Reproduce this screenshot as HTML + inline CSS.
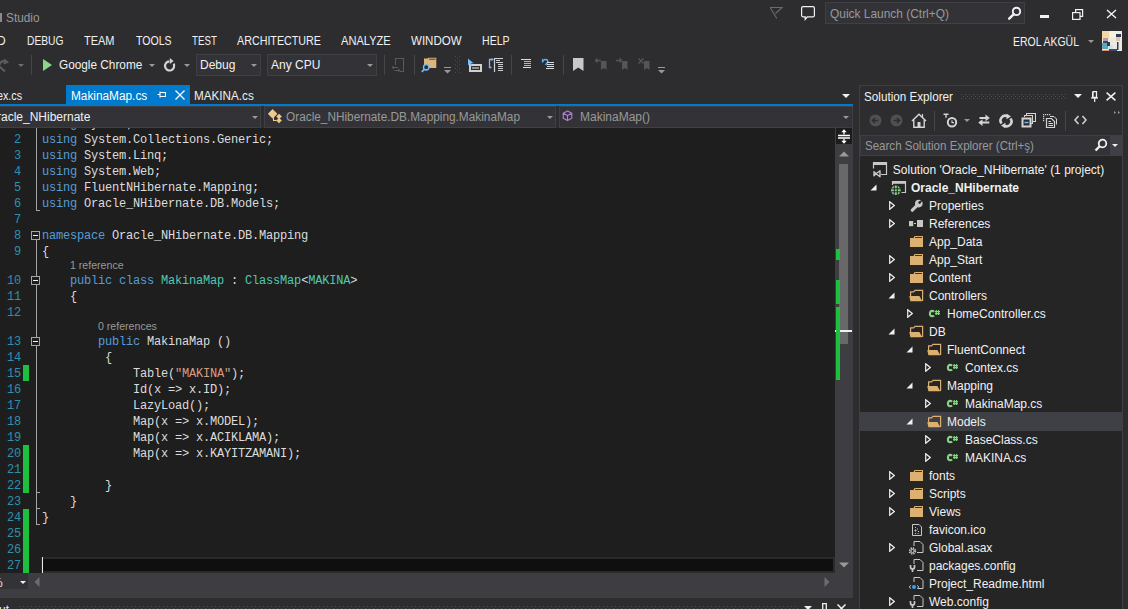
<!DOCTYPE html>
<html><head><meta charset="utf-8"><style>
html,body{margin:0;padding:0;width:1128px;height:609px;overflow:hidden;background:#2d2d30;}
body{position:relative;font-family:"Liberation Sans",sans-serif;}
.r,.t,.s{position:absolute;}
.t{white-space:nowrap;line-height:1;transform-origin:0 0;}
.ln{position:absolute;left:0;width:21px;text-align:right;font-family:"Liberation Mono",monospace;font-size:12px;letter-spacing:-0.2px;line-height:16px;color:#2b91af;}
.code{position:absolute;left:42px;white-space:pre;font-family:"Liberation Mono",monospace;font-size:12px;letter-spacing:-0.2px;line-height:16px;color:#dcdcdc;}
.lens{position:absolute;font-family:"Liberation Sans",sans-serif;font-size:10.6px;line-height:13px;color:#999;white-space:nowrap;}
</style></head><body>
<div class="r" style="left:0px;top:0px;width:1128px;height:609px;background:#2d2d30;"></div>
<div class="r" style="left:0px;top:13px;width:2px;height:9px;background:#8a8a8a;"></div>
<div class="t" style="left:6.4px;top:11.30px;font-size:13px;color:#999999;transform:scaleX(0.9085);">Studio</div>
<svg class="s" style="left:769px;top:6px;" width="15" height="14" viewBox="0 0 15 14"><path d="M1.2 1.5H13L6.5 7.5M1.2 1.5L7.8 12.5" fill="none" stroke="#6b6b6b" stroke-width="1.1"/></svg>
<svg class="s" style="left:800px;top:5px;" width="16" height="16" viewBox="0 0 16 16"><path d="M3 1.6H13A1.4 1.4 0 0 1 14.4 3V10.4A1.4 1.4 0 0 1 13 11.8H7.3L5.2 14.4V11.8H3A1.4 1.4 0 0 1 1.6 10.4V3A1.4 1.4 0 0 1 3 1.6Z" fill="none" stroke="#f1f1f1" stroke-width="1.2"/></svg>
<div class="r" style="left:825px;top:2px;width:200px;height:22px;background:#333337;border:1px solid #3f3f46;box-sizing:border-box;"></div>
<div class="t" style="left:830px;top:7.20px;font-size:13px;color:#999999;transform:scaleX(0.9175);">Quick Launch (Ctrl+Q)</div>
<svg class="s" style="left:1007px;top:6px;" width="16" height="14" viewBox="0 0 16 14"><circle cx="9.5" cy="5.4" r="3.7" fill="none" stroke="#f1f1f1" stroke-width="1.9"/><path d="M6.8 8.2L2.2 12.6" stroke="#f1f1f1" stroke-width="2.5" stroke-linecap="round"/></svg>
<div class="r" style="left:1040px;top:15px;width:9px;height:3px;background:#f1f1f1;"></div>
<svg class="s" style="left:1072px;top:9px;" width="12" height="11" viewBox="0 0 12 11"><path d="M3.6 3V0.6H10.6V7.4H8" fill="none" stroke="#f1f1f1" stroke-width="1.2"/><rect x="0.6" y="3.6" width="7.4" height="6.8" fill="none" stroke="#f1f1f1" stroke-width="1.2"/></svg>
<svg class="s" style="left:1106px;top:9px;" width="11" height="10" viewBox="0 0 11 10"><path d="M1 1L10 9M10 1L1 9" stroke="#f1f1f1" stroke-width="1.4"/></svg>
<div class="t" style="left:-3px;top:34.54px;font-size:12px;color:#f1f1f1;">D</div>
<div class="t" style="left:26.6px;top:34.54px;font-size:12px;color:#f1f1f1;transform:scaleX(0.8554);">DEBUG</div>
<div class="t" style="left:84px;top:34.54px;font-size:12px;color:#f1f1f1;transform:scaleX(0.9151);">TEAM</div>
<div class="t" style="left:135.8px;top:34.54px;font-size:12px;color:#f1f1f1;transform:scaleX(0.8779);">TOOLS</div>
<div class="t" style="left:191.5px;top:34.54px;font-size:12px;color:#f1f1f1;transform:scaleX(0.8090);">TEST</div>
<div class="t" style="left:236.9px;top:34.54px;font-size:12px;color:#f1f1f1;transform:scaleX(0.8935);">ARCHITECTURE</div>
<div class="t" style="left:341.1px;top:34.54px;font-size:12px;color:#f1f1f1;transform:scaleX(0.9241);">ANALYZE</div>
<div class="t" style="left:411.3px;top:34.54px;font-size:12px;color:#f1f1f1;transform:scaleX(0.9609);">WINDOW</div>
<div class="t" style="left:482.1px;top:34.54px;font-size:12px;color:#f1f1f1;transform:scaleX(0.8806);">HELP</div>
<div class="t" style="left:1013.4px;top:35.40px;font-size:13px;color:#f1f1f1;transform:scaleX(0.8060);">EROL AKGÜL</div>
<svg class="s" style="left:1088px;top:40px;" width="6" height="3" viewBox="0 0 6 3"><path d="M0 0H6L3.0 3Z" fill="#999"/></svg>
<svg class="s" style="left:1102px;top:31px;" width="20" height="20" viewBox="0 0 20 20"><rect width="20" height="20" fill="#f4ead8"/><rect x="0" y="0" width="7" height="8" fill="#f2d8a8"/><rect x="7" y="0" width="7" height="6" fill="#f6f0e4"/><rect x="1" y="7" width="5" height="4" fill="#b89aa8"/><rect x="1" y="10" width="5" height="3" fill="#3a4a6a"/><rect x="0" y="12" width="6" height="6" fill="#5aa8b8"/><rect x="6" y="14" width="5" height="4" fill="#d0e0e4"/><rect x="5" y="11" width="3" height="4" fill="#2a3a5a"/><rect x="14" y="3" width="5" height="3" fill="#2a3a5a"/><rect x="14" y="6" width="4" height="4" fill="#e0c4b0"/><rect x="12" y="10" width="7" height="9" fill="#ece8e4"/><rect x="15" y="11" width="1.5" height="8" fill="#2a3a5a"/><rect x="0" y="19" width="7" height="1" fill="#e09060"/><rect x="7" y="18" width="8" height="2" fill="#3a4a70"/><rect x="8" y="8" width="4" height="4" fill="#dcecec"/></svg>
<svg class="s" style="left:0px;top:57px;" width="10" height="15" viewBox="0 0 10 15"><path d="M-1 8Q1.5 2.5 6 4.5" fill="none" stroke="#5a5a5a" stroke-width="2.3"/><path d="M4.3 1.2L9.2 5.4L3.6 7.6Z" fill="#5a5a5a"/><path d="M-0.5 9.5L5 14.5" stroke="#5a5a5a" stroke-width="2.2"/></svg>
<svg class="s" style="left:18px;top:64px;" width="6" height="3" viewBox="0 0 6 3"><path d="M0 0H6L3.0 3Z" fill="#6d6d6d"/></svg>
<div class="r" style="left:31px;top:55px;width:1px;height:20px;background:#46464a;"></div>
<svg class="s" style="left:43px;top:59px;" width="9" height="12" viewBox="0 0 9 12"><path d="M0 0L9 6L0 12Z" fill="#8cd58c"/></svg>
<div class="t" style="left:59.4px;top:58.94px;font-size:12px;color:#f1f1f1;transform:scaleX(0.9834);">Google Chrome</div>
<svg class="s" style="left:149px;top:64px;" width="6" height="3" viewBox="0 0 6 3"><path d="M0 0H6L3.0 3Z" fill="#999"/></svg>
<svg class="s" style="left:163px;top:58px;" width="13" height="15" viewBox="0 0 13 15"><path d="M10.6 5.6A4.6 4.6 0 1 1 6.4 3.3" fill="none" stroke="#d4d4d4" stroke-width="2.2"/><path d="M6.8 0L10.6 3.1L6.8 6Z" fill="#d4d4d4"/></svg>
<svg class="s" style="left:184px;top:64px;" width="6" height="3" viewBox="0 0 6 3"><path d="M0 0H6L3.0 3Z" fill="#999"/></svg>
<div class="r" style="left:196px;top:54px;width:65px;height:22px;background:#333337;border:1px solid #3f3f46;box-sizing:border-box;"></div>
<div class="t" style="left:200px;top:58.94px;font-size:12px;color:#f1f1f1;">Debug</div>
<svg class="s" style="left:251px;top:64px;" width="6" height="3" viewBox="0 0 6 3"><path d="M0 0H6L3.0 3Z" fill="#999"/></svg>
<div class="r" style="left:267px;top:54px;width:110px;height:22px;background:#333337;border:1px solid #3f3f46;box-sizing:border-box;"></div>
<div class="t" style="left:271px;top:58.94px;font-size:12px;color:#f1f1f1;">Any CPU</div>
<svg class="s" style="left:367px;top:64px;" width="6" height="3" viewBox="0 0 6 3"><path d="M0 0H6L3.0 3Z" fill="#999"/></svg>
<div class="r" style="left:384px;top:55px;width:1px;height:20px;background:#46464a;"></div>
<svg class="s" style="left:391px;top:57px;" width="14" height="16" viewBox="0 0 14 16"><path d="M4.5 8V1.5H12.5V14.5H9" fill="none" stroke="#5a5a5a" stroke-width="1.1"/><path d="M2 10.5H7M3.5 13.5H8" stroke="#5a5a5a" stroke-width="1.2"/><path d="M0.5 10.5L2.8 8.6V12.4Z M9.5 13.5L7.2 11.6V15.4Z" fill="#5a5a5a"/></svg>
<div class="r" style="left:414px;top:55px;width:1px;height:20px;background:#46464a;"></div>
<svg class="s" style="left:421px;top:57px;" width="16" height="16" viewBox="0 0 16 16"><path d="M3 1.5H6.5L7.5 0.7H15.3V11H3Z" fill="#dcb67a"/><path d="M8 2.2H14.5" stroke="#3a3226" stroke-width="0.9"/><circle cx="5.2" cy="10.3" r="2.7" fill="#2d2d30" stroke="#75beff" stroke-width="1.4"/><path d="M3.2 12.5L0.8 14.9" stroke="#75beff" stroke-width="1.7"/></svg>
<svg class="s" style="left:444px;top:67px;" width="7" height="7" viewBox="0 0 7 7"><rect x="0" y="0" width="7" height="1" fill="#999"/><path d="M0 3H7L3.5 6.5Z" fill="#999"/></svg>
<svg class="s" style="left:455px;top:56px;" width="6" height="18" viewBox="0 0 6 18"><rect x="0" y="0" width="1" height="1" fill="#4a4a4f"/><rect x="4" y="0" width="1" height="1" fill="#4a4a4f"/><rect x="2" y="2" width="1" height="1" fill="#4a4a4f"/><rect x="0" y="4" width="1" height="1" fill="#4a4a4f"/><rect x="4" y="4" width="1" height="1" fill="#4a4a4f"/><rect x="2" y="6" width="1" height="1" fill="#4a4a4f"/><rect x="0" y="8" width="1" height="1" fill="#4a4a4f"/><rect x="4" y="8" width="1" height="1" fill="#4a4a4f"/><rect x="2" y="10" width="1" height="1" fill="#4a4a4f"/><rect x="0" y="12" width="1" height="1" fill="#4a4a4f"/><rect x="4" y="12" width="1" height="1" fill="#4a4a4f"/><rect x="2" y="14" width="1" height="1" fill="#4a4a4f"/><rect x="0" y="16" width="1" height="1" fill="#4a4a4f"/><rect x="4" y="16" width="1" height="1" fill="#4a4a4f"/></svg>
<svg class="s" style="left:467px;top:58px;" width="16" height="15" viewBox="0 0 16 15"><rect x="3" y="7" width="11" height="6" fill="#2d2d30" stroke="#d0d0d0" stroke-width="2"/><path d="M5 10H12" stroke="#d0d0d0" stroke-width="1.2"/><path d="M1 0.5V7.5L2.8 5.8L4.2 8.5L5.3 8L4 5.3H6.6Z" fill="#75beff"/></svg>
<svg class="s" style="left:488px;top:57px;" width="16" height="16" viewBox="0 0 16 16"><path d="M3.5 2.5H1.5V10.5H3.5" fill="none" stroke="#75beff" stroke-width="1.3"/><path d="M1.5 2.5H5M3.5 1L5 2.5L3.5 4" fill="none" stroke="#75beff" stroke-width="1"/><path d="M6.5 1V15" stroke="#d0d0d0" stroke-width="1.2"/><path d="M6.5 1.5H15M8 3.5H12M10 7.5H15M10 9.5H15M10 11.5H15M10 13.5H15" stroke="#d0d0d0" stroke-width="1"/><path d="M8 5.5H15" stroke="#d0d0d0" stroke-width="1"/></svg>
<div class="r" style="left:511px;top:55px;width:1px;height:20px;background:#46464a;"></div>
<svg class="s" style="left:520px;top:59px;" width="12" height="11" viewBox="0 0 12 11"><path d="M1 0.5H11M3 8.5H11" stroke="#dcdcdc" stroke-width="1"/><path d="M4 2.5H11M4 4.5H11M4 6.5H11" stroke="#8cd58c" stroke-width="1"/></svg>
<svg class="s" style="left:541px;top:58px;" width="14" height="13" viewBox="0 0 14 13"><path d="M1.5 4.5Q1.5 1.5 4.5 1.5Q7.5 1.5 6.5 4.5L4.5 7" fill="none" stroke="#5ab0f0" stroke-width="1.5"/><path d="M0.5 2L2 0.5L2 3.5Z" fill="#5ab0f0"/><path d="M6 4.5H13M6 6.5H13M6 8.5H13M5 10.5H13" stroke="#dcdcdc" stroke-width="1"/></svg>
<div class="r" style="left:563px;top:55px;width:1px;height:20px;background:#46464a;"></div>
<svg class="s" style="left:573px;top:58px;" width="11" height="14" viewBox="0 0 11 14"><path d="M0 0H10.5V13L5.25 9.5L0 13Z" fill="#c8c8c8"/></svg>
<svg class="s" style="left:595px;top:58px;" width="12" height="13" viewBox="0 0 12 13"><path d="M6 3H11.5V12L8.75 10L6 12Z" fill="#555"/><path d="M0.5 2.5H6M2.5 0.5L0.5 2.5L2.5 4.5" fill="none" stroke="#555" stroke-width="1.3"/></svg>
<svg class="s" style="left:616px;top:58px;" width="12" height="13" viewBox="0 0 12 13"><path d="M6 3H11.5V12L8.75 10L6 12Z" fill="#555"/><path d="M0 2.5H5.5M3.5 0.5L5.5 2.5L3.5 4.5" fill="none" stroke="#555" stroke-width="1.3"/></svg>
<svg class="s" style="left:638px;top:58px;" width="12" height="13" viewBox="0 0 12 13"><path d="M6 3H11.5V12L8.75 10L6 12Z" fill="#555"/><path d="M0.5 0.5L5.5 5.5M5.5 0.5L0.5 5.5" fill="none" stroke="#555" stroke-width="1.3"/></svg>
<svg class="s" style="left:658px;top:67px;" width="7" height="7" viewBox="0 0 7 7"><rect x="0" y="0" width="7" height="1" fill="#999"/><path d="M0 3H7L3.5 6.5Z" fill="#999"/></svg>
<div class="t" style="left:-3px;top:90.24px;font-size:12px;color:#f1f1f1;transform:scaleX(0.8929);">ex.cs</div>
<div class="r" style="left:66px;top:85px;width:124px;height:19px;background:#007acc;"></div>
<div class="t" style="left:70.6px;top:90.24px;font-size:12px;color:#ffffff;transform:scaleX(0.9850);">MakinaMap.cs</div>
<svg class="s" style="left:157px;top:90px;" width="9" height="9" viewBox="0 0 9 9"><path d="M0.5 4.5H3M3 1.5V7.5M3 2.5H8.5V6.5H3" fill="none" stroke="#fff" stroke-width="1.1"/></svg>
<svg class="s" style="left:175px;top:90px;" width="10" height="10" viewBox="0 0 10 10"><path d="M0.5 0.5L9.5 9.5M9.5 0.5L0.5 9.5" stroke="#fff" stroke-width="1.25"/></svg>
<div class="t" style="left:194.4px;top:90.24px;font-size:12px;color:#f1f1f1;transform:scaleX(0.9735);">MAKINA.cs</div>
<svg class="s" style="left:842px;top:94px;" width="8" height="4" viewBox="0 0 8 4"><path d="M0 0H8L4.0 4Z" fill="#f1f1f1"/></svg>
<div class="r" style="left:0px;top:104px;width:853px;height:2px;background:#007acc;"></div>
<div class="r" style="left:0px;top:106px;width:853px;height:22px;background:#2d2d30;"></div>
<div class="r" style="left:-1px;top:106px;width:262px;height:22px;background:#333337;border:1px solid #3f3f46;box-sizing:border-box;"></div>
<div class="t" style="left:-3px;top:111.34px;font-size:12px;color:#f1f1f1;">racle_NHibernate</div>
<svg class="s" style="left:252px;top:116px;" width="6" height="3" viewBox="0 0 6 3"><path d="M0 0H6L3.0 3Z" fill="#999"/></svg>
<div class="r" style="left:264px;top:106px;width:292px;height:22px;background:#333337;border:1px solid #3f3f46;box-sizing:border-box;"></div>
<svg class="s" style="left:268px;top:109px;" width="15" height="15" viewBox="0 0 15 15"><path d="M0.3 4.8L4.6 0.5L9 4.8L4.6 9.2Z" fill="#f0c98f" stroke="#f0c98f" stroke-width="0.8" stroke-linejoin="round"/><path d="M8.2 7.5L11 4.7L13.8 7.5L11 10.3Z" fill="#f0c98f"/><path d="M8.2 11.5L11 8.7L13.8 11.5L11 14.3Z" fill="#f0c98f"/><path d="M5.5 7V11.5H8.5" fill="none" stroke="#f0c98f" stroke-width="1.1"/></svg>
<div class="t" style="left:285.6px;top:111.34px;font-size:12px;color:#999999;transform:scaleX(0.9855);">Oracle_NHibernate.DB.Mapping.MakinaMap</div>
<svg class="s" style="left:547px;top:116px;" width="6" height="3" viewBox="0 0 6 3"><path d="M0 0H6L3.0 3Z" fill="#999"/></svg>
<div class="r" style="left:559px;top:106px;width:294px;height:22px;background:#333337;border:1px solid #3f3f46;box-sizing:border-box;"></div>
<svg class="s" style="left:562px;top:110px;" width="11" height="12" viewBox="0 0 11 12"><path d="M5.5 1L9.8 3.3V8.3L5.5 10.6L1.2 8.3V3.3Z M1.2 3.3L5.5 5.6L9.8 3.3M5.5 5.6V10.6" fill="none" stroke="#b180d7" stroke-width="1.1" stroke-linejoin="round"/></svg>
<div class="t" style="left:580.3px;top:111.34px;font-size:12px;color:#999999;transform:scaleX(0.9996);">MakinaMap()</div>
<svg class="s" style="left:843px;top:116px;" width="6" height="3" viewBox="0 0 6 3"><path d="M0 0H6L3.0 3Z" fill="#999"/></svg>
<div class="r" style="left:0px;top:128px;width:835px;height:445px;background:#1e1e1e;"></div>
<div class="r" style="left:41px;top:557px;width:794px;height:16px;background:#0f0f0f;border:2px solid #2a2a2a;box-sizing:border-box;"></div>
<div class="r" style="left:42px;top:557px;width:1px;height:16px;background:#e8e8e8;"></div>
<div style="position:absolute;left:0;top:128px;width:835px;height:445px;overflow:hidden">
<div class="code" style="top:-12px"><span style="color:#569cd6">using</span><span style="color:#dcdcdc"> System;</span></div>
<div class="ln" style="top:4px">2</div>
<div class="code" style="top:4px"><span style="color:#569cd6">using</span><span style="color:#dcdcdc"> System.Collections.Generic;</span></div>
<div class="ln" style="top:20px">3</div>
<div class="code" style="top:20px"><span style="color:#569cd6">using</span><span style="color:#dcdcdc"> System.Linq;</span></div>
<div class="ln" style="top:36px">4</div>
<div class="code" style="top:36px"><span style="color:#569cd6">using</span><span style="color:#dcdcdc"> System.Web;</span></div>
<div class="ln" style="top:52px">5</div>
<div class="code" style="top:52px"><span style="color:#569cd6">using</span><span style="color:#dcdcdc"> FluentNHibernate.Mapping;</span></div>
<div class="ln" style="top:68px">6</div>
<div class="code" style="top:68px"><span style="color:#569cd6">using</span><span style="color:#dcdcdc"> Oracle_NHibernate.DB.Models;</span></div>
<div class="ln" style="top:84px">7</div>
<div class="ln" style="top:100px">8</div>
<div class="code" style="top:100px"><span style="color:#569cd6">namespace</span><span style="color:#dcdcdc"> Oracle_NHibernate.DB.Mapping</span></div>
<div class="ln" style="top:116px">9</div>
<div class="code" style="top:116px"><span style="color:#dcdcdc">{</span></div>
<div class="ln" style="top:145px">10</div>
<div class="code" style="top:145px"><span style="color:#dcdcdc">    </span><span style="color:#569cd6">public</span><span style="color:#dcdcdc"> </span><span style="color:#569cd6">class</span><span style="color:#dcdcdc"> </span><span style="color:#4ec9b0">MakinaMap</span><span style="color:#dcdcdc"> : </span><span style="color:#4ec9b0">ClassMap</span><span style="color:#dcdcdc">&lt;</span><span style="color:#4ec9b0">MAKINA</span><span style="color:#dcdcdc">&gt;</span></div>
<div class="ln" style="top:161px">11</div>
<div class="code" style="top:161px"><span style="color:#dcdcdc">    {</span></div>
<div class="ln" style="top:177px">12</div>
<div class="ln" style="top:206px">13</div>
<div class="code" style="top:206px"><span style="color:#dcdcdc">        </span><span style="color:#569cd6">public</span><span style="color:#dcdcdc"> MakinaMap ()</span></div>
<div class="ln" style="top:222px">14</div>
<div class="code" style="top:222px"><span style="color:#dcdcdc">         {</span></div>
<div class="ln" style="top:238px">15</div>
<div class="code" style="top:238px"><span style="color:#dcdcdc">             Table(</span><span style="color:#d69d85">"MAKINA"</span><span style="color:#dcdcdc">);</span></div>
<div class="ln" style="top:254px">16</div>
<div class="code" style="top:254px"><span style="color:#dcdcdc">             Id(x =&gt; x.ID);</span></div>
<div class="ln" style="top:270px">17</div>
<div class="code" style="top:270px"><span style="color:#dcdcdc">             LazyLoad();</span></div>
<div class="ln" style="top:286px">18</div>
<div class="code" style="top:286px"><span style="color:#dcdcdc">             Map(x =&gt; x.MODEL);</span></div>
<div class="ln" style="top:302px">19</div>
<div class="code" style="top:302px"><span style="color:#dcdcdc">             Map(x =&gt; x.ACIKLAMA);</span></div>
<div class="ln" style="top:318px">20</div>
<div class="code" style="top:318px"><span style="color:#dcdcdc">             Map(x =&gt; x.KAYITZAMANI);</span></div>
<div class="ln" style="top:334px">21</div>
<div class="ln" style="top:350px">22</div>
<div class="code" style="top:350px"><span style="color:#dcdcdc">         }</span></div>
<div class="ln" style="top:366px">23</div>
<div class="code" style="top:366px"><span style="color:#dcdcdc">    }</span></div>
<div class="ln" style="top:382px">24</div>
<div class="code" style="top:382px"><span style="color:#dcdcdc">}</span></div>
<div class="ln" style="top:398px">25</div>
<div class="ln" style="top:414px">26</div>
<div class="ln" style="top:430px">27</div>
<div class="lens" style="top:131px;left:70px">1 reference</div>
<div class="lens" style="top:192px;left:98px">0 references</div>
</div>
<div class="r" style="left:23px;top:365px;width:6px;height:16px;background:#1dc03e;"></div>
<div class="r" style="left:23px;top:445px;width:6px;height:48px;background:#1dc03e;"></div>
<div class="r" style="left:23px;top:509px;width:6px;height:64px;background:#1dc03e;"></div>
<div class="r" style="left:36px;top:128px;width:1px;height:82px;background:#a5a5a5;"></div>
<div class="r" style="left:36px;top:210px;width:4px;height:1px;background:#a5a5a5;"></div>
<svg class="s" style="left:31px;top:231px;" width="9" height="9" viewBox="0 0 9 9"><rect x="0.5" y="0.5" width="8" height="8" fill="#1e1e1e" stroke="#a5a5a5"/><path d="M2 4.5H7" stroke="#f1f1f1" stroke-width="1"/></svg>
<div class="r" style="left:36px;top:240px;width:1px;height:284px;background:#a5a5a5;"></div>
<div class="r" style="left:36px;top:524px;width:4px;height:1px;background:#a5a5a5;"></div>
<svg class="s" style="left:31px;top:276px;" width="9" height="9" viewBox="0 0 9 9"><rect x="0.5" y="0.5" width="8" height="8" fill="#1e1e1e" stroke="#a5a5a5"/><path d="M2 4.5H7" stroke="#f1f1f1" stroke-width="1"/></svg>
<div class="r" style="left:36px;top:508px;width:4px;height:1px;background:#a5a5a5;"></div>
<svg class="s" style="left:31px;top:337px;" width="9" height="9" viewBox="0 0 9 9"><rect x="0.5" y="0.5" width="8" height="8" fill="#1e1e1e" stroke="#a5a5a5"/><path d="M2 4.5H7" stroke="#f1f1f1" stroke-width="1"/></svg>
<div class="r" style="left:36px;top:492px;width:4px;height:1px;background:#a5a5a5;"></div>
<div class="r" style="left:835px;top:127px;width:18px;height:446px;background:#3e3e42;"></div>
<div class="r" style="left:836px;top:128px;width:16px;height:16px;background:#1c1c1c;"></div>
<svg class="s" style="left:837px;top:129px;" width="14" height="15" viewBox="0 0 14 15"><path d="M1 6.5H13M1 9H13" stroke="#fff" stroke-width="1.3"/><path d="M7 2V5.5M7 10V13" stroke="#fff" stroke-width="1.3"/><path d="M4.3 3.3L7 0.3L9.7 3.3ZM4.3 11.7L7 14.7L9.7 11.7Z" fill="#fff"/></svg>
<svg class="s" style="left:839px;top:151px;" width="10" height="6" viewBox="0 0 10 6"><path d="M0 5.5L5 0.5L10 5.5Z" fill="#999"/></svg>
<div class="r" style="left:839px;top:164px;width:9px;height:180px;background:#686868;"></div>
<div class="r" style="left:835px;top:330px;width:17px;height:2px;background:#f1f1f1;"></div>
<div class="r" style="left:836px;top:249px;width:4px;height:11px;background:#1dc03e;"></div>
<div class="r" style="left:836px;top:280px;width:4px;height:24px;background:#1dc03e;"></div>
<div class="r" style="left:836px;top:307px;width:4px;height:73px;background:#1dc03e;"></div>
<svg class="s" style="left:839px;top:562px;" width="10" height="6" viewBox="0 0 10 6"><path d="M0 0.5L5 5.5L10 0.5Z" fill="#999"/></svg>
<div class="r" style="left:0px;top:573px;width:853px;height:25px;background:#3e3e42;"></div>
<div class="r" style="left:0px;top:573px;width:28px;height:16px;background:#333337;"></div>
<div class="t" style="left:-8px;top:576.84px;font-size:12px;color:#f1f1f1;">%</div>
<svg class="s" style="left:20px;top:581px;" width="6" height="3" viewBox="0 0 6 3"><path d="M0 0H6L3.0 3Z" fill="#f1f1f1"/></svg>
<svg class="s" style="left:34px;top:577px;" width="6" height="10" viewBox="0 0 6 10"><path d="M5.5 0L0.5 5L5.5 10Z" fill="#6d6d6d"/></svg>
<svg class="s" style="left:824px;top:577px;" width="6" height="10" viewBox="0 0 6 10"><path d="M0.5 0L5.5 5L0.5 10Z" fill="#6d6d6d"/></svg>
<div class="r" style="left:0px;top:598px;width:853px;height:11px;background:#2d2d30;"></div>
<div class="t" style="left:-1px;top:603.84px;font-size:12px;color:#f1f1f1;">ut</div>
<svg class="s" style="left:19px;top:606px;" width="780" height="3" viewBox="0 0 780 3"><rect x="0" y="0" width="1" height="1" fill="#505055"/><rect x="2" y="2" width="1" height="1" fill="#505055"/><rect x="4" y="0" width="1" height="1" fill="#505055"/><rect x="6" y="2" width="1" height="1" fill="#505055"/><rect x="8" y="0" width="1" height="1" fill="#505055"/><rect x="10" y="2" width="1" height="1" fill="#505055"/><rect x="12" y="0" width="1" height="1" fill="#505055"/><rect x="14" y="2" width="1" height="1" fill="#505055"/><rect x="16" y="0" width="1" height="1" fill="#505055"/><rect x="18" y="2" width="1" height="1" fill="#505055"/><rect x="20" y="0" width="1" height="1" fill="#505055"/><rect x="22" y="2" width="1" height="1" fill="#505055"/><rect x="24" y="0" width="1" height="1" fill="#505055"/><rect x="26" y="2" width="1" height="1" fill="#505055"/><rect x="28" y="0" width="1" height="1" fill="#505055"/><rect x="30" y="2" width="1" height="1" fill="#505055"/><rect x="32" y="0" width="1" height="1" fill="#505055"/><rect x="34" y="2" width="1" height="1" fill="#505055"/><rect x="36" y="0" width="1" height="1" fill="#505055"/><rect x="38" y="2" width="1" height="1" fill="#505055"/><rect x="40" y="0" width="1" height="1" fill="#505055"/><rect x="42" y="2" width="1" height="1" fill="#505055"/><rect x="44" y="0" width="1" height="1" fill="#505055"/><rect x="46" y="2" width="1" height="1" fill="#505055"/><rect x="48" y="0" width="1" height="1" fill="#505055"/><rect x="50" y="2" width="1" height="1" fill="#505055"/><rect x="52" y="0" width="1" height="1" fill="#505055"/><rect x="54" y="2" width="1" height="1" fill="#505055"/><rect x="56" y="0" width="1" height="1" fill="#505055"/><rect x="58" y="2" width="1" height="1" fill="#505055"/><rect x="60" y="0" width="1" height="1" fill="#505055"/><rect x="62" y="2" width="1" height="1" fill="#505055"/><rect x="64" y="0" width="1" height="1" fill="#505055"/><rect x="66" y="2" width="1" height="1" fill="#505055"/><rect x="68" y="0" width="1" height="1" fill="#505055"/><rect x="70" y="2" width="1" height="1" fill="#505055"/><rect x="72" y="0" width="1" height="1" fill="#505055"/><rect x="74" y="2" width="1" height="1" fill="#505055"/><rect x="76" y="0" width="1" height="1" fill="#505055"/><rect x="78" y="2" width="1" height="1" fill="#505055"/><rect x="80" y="0" width="1" height="1" fill="#505055"/><rect x="82" y="2" width="1" height="1" fill="#505055"/><rect x="84" y="0" width="1" height="1" fill="#505055"/><rect x="86" y="2" width="1" height="1" fill="#505055"/><rect x="88" y="0" width="1" height="1" fill="#505055"/><rect x="90" y="2" width="1" height="1" fill="#505055"/><rect x="92" y="0" width="1" height="1" fill="#505055"/><rect x="94" y="2" width="1" height="1" fill="#505055"/><rect x="96" y="0" width="1" height="1" fill="#505055"/><rect x="98" y="2" width="1" height="1" fill="#505055"/><rect x="100" y="0" width="1" height="1" fill="#505055"/><rect x="102" y="2" width="1" height="1" fill="#505055"/><rect x="104" y="0" width="1" height="1" fill="#505055"/><rect x="106" y="2" width="1" height="1" fill="#505055"/><rect x="108" y="0" width="1" height="1" fill="#505055"/><rect x="110" y="2" width="1" height="1" fill="#505055"/><rect x="112" y="0" width="1" height="1" fill="#505055"/><rect x="114" y="2" width="1" height="1" fill="#505055"/><rect x="116" y="0" width="1" height="1" fill="#505055"/><rect x="118" y="2" width="1" height="1" fill="#505055"/><rect x="120" y="0" width="1" height="1" fill="#505055"/><rect x="122" y="2" width="1" height="1" fill="#505055"/><rect x="124" y="0" width="1" height="1" fill="#505055"/><rect x="126" y="2" width="1" height="1" fill="#505055"/><rect x="128" y="0" width="1" height="1" fill="#505055"/><rect x="130" y="2" width="1" height="1" fill="#505055"/><rect x="132" y="0" width="1" height="1" fill="#505055"/><rect x="134" y="2" width="1" height="1" fill="#505055"/><rect x="136" y="0" width="1" height="1" fill="#505055"/><rect x="138" y="2" width="1" height="1" fill="#505055"/><rect x="140" y="0" width="1" height="1" fill="#505055"/><rect x="142" y="2" width="1" height="1" fill="#505055"/><rect x="144" y="0" width="1" height="1" fill="#505055"/><rect x="146" y="2" width="1" height="1" fill="#505055"/><rect x="148" y="0" width="1" height="1" fill="#505055"/><rect x="150" y="2" width="1" height="1" fill="#505055"/><rect x="152" y="0" width="1" height="1" fill="#505055"/><rect x="154" y="2" width="1" height="1" fill="#505055"/><rect x="156" y="0" width="1" height="1" fill="#505055"/><rect x="158" y="2" width="1" height="1" fill="#505055"/><rect x="160" y="0" width="1" height="1" fill="#505055"/><rect x="162" y="2" width="1" height="1" fill="#505055"/><rect x="164" y="0" width="1" height="1" fill="#505055"/><rect x="166" y="2" width="1" height="1" fill="#505055"/><rect x="168" y="0" width="1" height="1" fill="#505055"/><rect x="170" y="2" width="1" height="1" fill="#505055"/><rect x="172" y="0" width="1" height="1" fill="#505055"/><rect x="174" y="2" width="1" height="1" fill="#505055"/><rect x="176" y="0" width="1" height="1" fill="#505055"/><rect x="178" y="2" width="1" height="1" fill="#505055"/><rect x="180" y="0" width="1" height="1" fill="#505055"/><rect x="182" y="2" width="1" height="1" fill="#505055"/><rect x="184" y="0" width="1" height="1" fill="#505055"/><rect x="186" y="2" width="1" height="1" fill="#505055"/><rect x="188" y="0" width="1" height="1" fill="#505055"/><rect x="190" y="2" width="1" height="1" fill="#505055"/><rect x="192" y="0" width="1" height="1" fill="#505055"/><rect x="194" y="2" width="1" height="1" fill="#505055"/><rect x="196" y="0" width="1" height="1" fill="#505055"/><rect x="198" y="2" width="1" height="1" fill="#505055"/><rect x="200" y="0" width="1" height="1" fill="#505055"/><rect x="202" y="2" width="1" height="1" fill="#505055"/><rect x="204" y="0" width="1" height="1" fill="#505055"/><rect x="206" y="2" width="1" height="1" fill="#505055"/><rect x="208" y="0" width="1" height="1" fill="#505055"/><rect x="210" y="2" width="1" height="1" fill="#505055"/><rect x="212" y="0" width="1" height="1" fill="#505055"/><rect x="214" y="2" width="1" height="1" fill="#505055"/><rect x="216" y="0" width="1" height="1" fill="#505055"/><rect x="218" y="2" width="1" height="1" fill="#505055"/><rect x="220" y="0" width="1" height="1" fill="#505055"/><rect x="222" y="2" width="1" height="1" fill="#505055"/><rect x="224" y="0" width="1" height="1" fill="#505055"/><rect x="226" y="2" width="1" height="1" fill="#505055"/><rect x="228" y="0" width="1" height="1" fill="#505055"/><rect x="230" y="2" width="1" height="1" fill="#505055"/><rect x="232" y="0" width="1" height="1" fill="#505055"/><rect x="234" y="2" width="1" height="1" fill="#505055"/><rect x="236" y="0" width="1" height="1" fill="#505055"/><rect x="238" y="2" width="1" height="1" fill="#505055"/><rect x="240" y="0" width="1" height="1" fill="#505055"/><rect x="242" y="2" width="1" height="1" fill="#505055"/><rect x="244" y="0" width="1" height="1" fill="#505055"/><rect x="246" y="2" width="1" height="1" fill="#505055"/><rect x="248" y="0" width="1" height="1" fill="#505055"/><rect x="250" y="2" width="1" height="1" fill="#505055"/><rect x="252" y="0" width="1" height="1" fill="#505055"/><rect x="254" y="2" width="1" height="1" fill="#505055"/><rect x="256" y="0" width="1" height="1" fill="#505055"/><rect x="258" y="2" width="1" height="1" fill="#505055"/><rect x="260" y="0" width="1" height="1" fill="#505055"/><rect x="262" y="2" width="1" height="1" fill="#505055"/><rect x="264" y="0" width="1" height="1" fill="#505055"/><rect x="266" y="2" width="1" height="1" fill="#505055"/><rect x="268" y="0" width="1" height="1" fill="#505055"/><rect x="270" y="2" width="1" height="1" fill="#505055"/><rect x="272" y="0" width="1" height="1" fill="#505055"/><rect x="274" y="2" width="1" height="1" fill="#505055"/><rect x="276" y="0" width="1" height="1" fill="#505055"/><rect x="278" y="2" width="1" height="1" fill="#505055"/><rect x="280" y="0" width="1" height="1" fill="#505055"/><rect x="282" y="2" width="1" height="1" fill="#505055"/><rect x="284" y="0" width="1" height="1" fill="#505055"/><rect x="286" y="2" width="1" height="1" fill="#505055"/><rect x="288" y="0" width="1" height="1" fill="#505055"/><rect x="290" y="2" width="1" height="1" fill="#505055"/><rect x="292" y="0" width="1" height="1" fill="#505055"/><rect x="294" y="2" width="1" height="1" fill="#505055"/><rect x="296" y="0" width="1" height="1" fill="#505055"/><rect x="298" y="2" width="1" height="1" fill="#505055"/><rect x="300" y="0" width="1" height="1" fill="#505055"/><rect x="302" y="2" width="1" height="1" fill="#505055"/><rect x="304" y="0" width="1" height="1" fill="#505055"/><rect x="306" y="2" width="1" height="1" fill="#505055"/><rect x="308" y="0" width="1" height="1" fill="#505055"/><rect x="310" y="2" width="1" height="1" fill="#505055"/><rect x="312" y="0" width="1" height="1" fill="#505055"/><rect x="314" y="2" width="1" height="1" fill="#505055"/><rect x="316" y="0" width="1" height="1" fill="#505055"/><rect x="318" y="2" width="1" height="1" fill="#505055"/><rect x="320" y="0" width="1" height="1" fill="#505055"/><rect x="322" y="2" width="1" height="1" fill="#505055"/><rect x="324" y="0" width="1" height="1" fill="#505055"/><rect x="326" y="2" width="1" height="1" fill="#505055"/><rect x="328" y="0" width="1" height="1" fill="#505055"/><rect x="330" y="2" width="1" height="1" fill="#505055"/><rect x="332" y="0" width="1" height="1" fill="#505055"/><rect x="334" y="2" width="1" height="1" fill="#505055"/><rect x="336" y="0" width="1" height="1" fill="#505055"/><rect x="338" y="2" width="1" height="1" fill="#505055"/><rect x="340" y="0" width="1" height="1" fill="#505055"/><rect x="342" y="2" width="1" height="1" fill="#505055"/><rect x="344" y="0" width="1" height="1" fill="#505055"/><rect x="346" y="2" width="1" height="1" fill="#505055"/><rect x="348" y="0" width="1" height="1" fill="#505055"/><rect x="350" y="2" width="1" height="1" fill="#505055"/><rect x="352" y="0" width="1" height="1" fill="#505055"/><rect x="354" y="2" width="1" height="1" fill="#505055"/><rect x="356" y="0" width="1" height="1" fill="#505055"/><rect x="358" y="2" width="1" height="1" fill="#505055"/><rect x="360" y="0" width="1" height="1" fill="#505055"/><rect x="362" y="2" width="1" height="1" fill="#505055"/><rect x="364" y="0" width="1" height="1" fill="#505055"/><rect x="366" y="2" width="1" height="1" fill="#505055"/><rect x="368" y="0" width="1" height="1" fill="#505055"/><rect x="370" y="2" width="1" height="1" fill="#505055"/><rect x="372" y="0" width="1" height="1" fill="#505055"/><rect x="374" y="2" width="1" height="1" fill="#505055"/><rect x="376" y="0" width="1" height="1" fill="#505055"/><rect x="378" y="2" width="1" height="1" fill="#505055"/><rect x="380" y="0" width="1" height="1" fill="#505055"/><rect x="382" y="2" width="1" height="1" fill="#505055"/><rect x="384" y="0" width="1" height="1" fill="#505055"/><rect x="386" y="2" width="1" height="1" fill="#505055"/><rect x="388" y="0" width="1" height="1" fill="#505055"/><rect x="390" y="2" width="1" height="1" fill="#505055"/><rect x="392" y="0" width="1" height="1" fill="#505055"/><rect x="394" y="2" width="1" height="1" fill="#505055"/><rect x="396" y="0" width="1" height="1" fill="#505055"/><rect x="398" y="2" width="1" height="1" fill="#505055"/><rect x="400" y="0" width="1" height="1" fill="#505055"/><rect x="402" y="2" width="1" height="1" fill="#505055"/><rect x="404" y="0" width="1" height="1" fill="#505055"/><rect x="406" y="2" width="1" height="1" fill="#505055"/><rect x="408" y="0" width="1" height="1" fill="#505055"/><rect x="410" y="2" width="1" height="1" fill="#505055"/><rect x="412" y="0" width="1" height="1" fill="#505055"/><rect x="414" y="2" width="1" height="1" fill="#505055"/><rect x="416" y="0" width="1" height="1" fill="#505055"/><rect x="418" y="2" width="1" height="1" fill="#505055"/><rect x="420" y="0" width="1" height="1" fill="#505055"/><rect x="422" y="2" width="1" height="1" fill="#505055"/><rect x="424" y="0" width="1" height="1" fill="#505055"/><rect x="426" y="2" width="1" height="1" fill="#505055"/><rect x="428" y="0" width="1" height="1" fill="#505055"/><rect x="430" y="2" width="1" height="1" fill="#505055"/><rect x="432" y="0" width="1" height="1" fill="#505055"/><rect x="434" y="2" width="1" height="1" fill="#505055"/><rect x="436" y="0" width="1" height="1" fill="#505055"/><rect x="438" y="2" width="1" height="1" fill="#505055"/><rect x="440" y="0" width="1" height="1" fill="#505055"/><rect x="442" y="2" width="1" height="1" fill="#505055"/><rect x="444" y="0" width="1" height="1" fill="#505055"/><rect x="446" y="2" width="1" height="1" fill="#505055"/><rect x="448" y="0" width="1" height="1" fill="#505055"/><rect x="450" y="2" width="1" height="1" fill="#505055"/><rect x="452" y="0" width="1" height="1" fill="#505055"/><rect x="454" y="2" width="1" height="1" fill="#505055"/><rect x="456" y="0" width="1" height="1" fill="#505055"/><rect x="458" y="2" width="1" height="1" fill="#505055"/><rect x="460" y="0" width="1" height="1" fill="#505055"/><rect x="462" y="2" width="1" height="1" fill="#505055"/><rect x="464" y="0" width="1" height="1" fill="#505055"/><rect x="466" y="2" width="1" height="1" fill="#505055"/><rect x="468" y="0" width="1" height="1" fill="#505055"/><rect x="470" y="2" width="1" height="1" fill="#505055"/><rect x="472" y="0" width="1" height="1" fill="#505055"/><rect x="474" y="2" width="1" height="1" fill="#505055"/><rect x="476" y="0" width="1" height="1" fill="#505055"/><rect x="478" y="2" width="1" height="1" fill="#505055"/><rect x="480" y="0" width="1" height="1" fill="#505055"/><rect x="482" y="2" width="1" height="1" fill="#505055"/><rect x="484" y="0" width="1" height="1" fill="#505055"/><rect x="486" y="2" width="1" height="1" fill="#505055"/><rect x="488" y="0" width="1" height="1" fill="#505055"/><rect x="490" y="2" width="1" height="1" fill="#505055"/><rect x="492" y="0" width="1" height="1" fill="#505055"/><rect x="494" y="2" width="1" height="1" fill="#505055"/><rect x="496" y="0" width="1" height="1" fill="#505055"/><rect x="498" y="2" width="1" height="1" fill="#505055"/><rect x="500" y="0" width="1" height="1" fill="#505055"/><rect x="502" y="2" width="1" height="1" fill="#505055"/><rect x="504" y="0" width="1" height="1" fill="#505055"/><rect x="506" y="2" width="1" height="1" fill="#505055"/><rect x="508" y="0" width="1" height="1" fill="#505055"/><rect x="510" y="2" width="1" height="1" fill="#505055"/><rect x="512" y="0" width="1" height="1" fill="#505055"/><rect x="514" y="2" width="1" height="1" fill="#505055"/><rect x="516" y="0" width="1" height="1" fill="#505055"/><rect x="518" y="2" width="1" height="1" fill="#505055"/><rect x="520" y="0" width="1" height="1" fill="#505055"/><rect x="522" y="2" width="1" height="1" fill="#505055"/><rect x="524" y="0" width="1" height="1" fill="#505055"/><rect x="526" y="2" width="1" height="1" fill="#505055"/><rect x="528" y="0" width="1" height="1" fill="#505055"/><rect x="530" y="2" width="1" height="1" fill="#505055"/><rect x="532" y="0" width="1" height="1" fill="#505055"/><rect x="534" y="2" width="1" height="1" fill="#505055"/><rect x="536" y="0" width="1" height="1" fill="#505055"/><rect x="538" y="2" width="1" height="1" fill="#505055"/><rect x="540" y="0" width="1" height="1" fill="#505055"/><rect x="542" y="2" width="1" height="1" fill="#505055"/><rect x="544" y="0" width="1" height="1" fill="#505055"/><rect x="546" y="2" width="1" height="1" fill="#505055"/><rect x="548" y="0" width="1" height="1" fill="#505055"/><rect x="550" y="2" width="1" height="1" fill="#505055"/><rect x="552" y="0" width="1" height="1" fill="#505055"/><rect x="554" y="2" width="1" height="1" fill="#505055"/><rect x="556" y="0" width="1" height="1" fill="#505055"/><rect x="558" y="2" width="1" height="1" fill="#505055"/><rect x="560" y="0" width="1" height="1" fill="#505055"/><rect x="562" y="2" width="1" height="1" fill="#505055"/><rect x="564" y="0" width="1" height="1" fill="#505055"/><rect x="566" y="2" width="1" height="1" fill="#505055"/><rect x="568" y="0" width="1" height="1" fill="#505055"/><rect x="570" y="2" width="1" height="1" fill="#505055"/><rect x="572" y="0" width="1" height="1" fill="#505055"/><rect x="574" y="2" width="1" height="1" fill="#505055"/><rect x="576" y="0" width="1" height="1" fill="#505055"/><rect x="578" y="2" width="1" height="1" fill="#505055"/><rect x="580" y="0" width="1" height="1" fill="#505055"/><rect x="582" y="2" width="1" height="1" fill="#505055"/><rect x="584" y="0" width="1" height="1" fill="#505055"/><rect x="586" y="2" width="1" height="1" fill="#505055"/><rect x="588" y="0" width="1" height="1" fill="#505055"/><rect x="590" y="2" width="1" height="1" fill="#505055"/><rect x="592" y="0" width="1" height="1" fill="#505055"/><rect x="594" y="2" width="1" height="1" fill="#505055"/><rect x="596" y="0" width="1" height="1" fill="#505055"/><rect x="598" y="2" width="1" height="1" fill="#505055"/><rect x="600" y="0" width="1" height="1" fill="#505055"/><rect x="602" y="2" width="1" height="1" fill="#505055"/><rect x="604" y="0" width="1" height="1" fill="#505055"/><rect x="606" y="2" width="1" height="1" fill="#505055"/><rect x="608" y="0" width="1" height="1" fill="#505055"/><rect x="610" y="2" width="1" height="1" fill="#505055"/><rect x="612" y="0" width="1" height="1" fill="#505055"/><rect x="614" y="2" width="1" height="1" fill="#505055"/><rect x="616" y="0" width="1" height="1" fill="#505055"/><rect x="618" y="2" width="1" height="1" fill="#505055"/><rect x="620" y="0" width="1" height="1" fill="#505055"/><rect x="622" y="2" width="1" height="1" fill="#505055"/><rect x="624" y="0" width="1" height="1" fill="#505055"/><rect x="626" y="2" width="1" height="1" fill="#505055"/><rect x="628" y="0" width="1" height="1" fill="#505055"/><rect x="630" y="2" width="1" height="1" fill="#505055"/><rect x="632" y="0" width="1" height="1" fill="#505055"/><rect x="634" y="2" width="1" height="1" fill="#505055"/><rect x="636" y="0" width="1" height="1" fill="#505055"/><rect x="638" y="2" width="1" height="1" fill="#505055"/><rect x="640" y="0" width="1" height="1" fill="#505055"/><rect x="642" y="2" width="1" height="1" fill="#505055"/><rect x="644" y="0" width="1" height="1" fill="#505055"/><rect x="646" y="2" width="1" height="1" fill="#505055"/><rect x="648" y="0" width="1" height="1" fill="#505055"/><rect x="650" y="2" width="1" height="1" fill="#505055"/><rect x="652" y="0" width="1" height="1" fill="#505055"/><rect x="654" y="2" width="1" height="1" fill="#505055"/><rect x="656" y="0" width="1" height="1" fill="#505055"/><rect x="658" y="2" width="1" height="1" fill="#505055"/><rect x="660" y="0" width="1" height="1" fill="#505055"/><rect x="662" y="2" width="1" height="1" fill="#505055"/><rect x="664" y="0" width="1" height="1" fill="#505055"/><rect x="666" y="2" width="1" height="1" fill="#505055"/><rect x="668" y="0" width="1" height="1" fill="#505055"/><rect x="670" y="2" width="1" height="1" fill="#505055"/><rect x="672" y="0" width="1" height="1" fill="#505055"/><rect x="674" y="2" width="1" height="1" fill="#505055"/><rect x="676" y="0" width="1" height="1" fill="#505055"/><rect x="678" y="2" width="1" height="1" fill="#505055"/><rect x="680" y="0" width="1" height="1" fill="#505055"/><rect x="682" y="2" width="1" height="1" fill="#505055"/><rect x="684" y="0" width="1" height="1" fill="#505055"/><rect x="686" y="2" width="1" height="1" fill="#505055"/><rect x="688" y="0" width="1" height="1" fill="#505055"/><rect x="690" y="2" width="1" height="1" fill="#505055"/><rect x="692" y="0" width="1" height="1" fill="#505055"/><rect x="694" y="2" width="1" height="1" fill="#505055"/><rect x="696" y="0" width="1" height="1" fill="#505055"/><rect x="698" y="2" width="1" height="1" fill="#505055"/><rect x="700" y="0" width="1" height="1" fill="#505055"/><rect x="702" y="2" width="1" height="1" fill="#505055"/><rect x="704" y="0" width="1" height="1" fill="#505055"/><rect x="706" y="2" width="1" height="1" fill="#505055"/><rect x="708" y="0" width="1" height="1" fill="#505055"/><rect x="710" y="2" width="1" height="1" fill="#505055"/><rect x="712" y="0" width="1" height="1" fill="#505055"/><rect x="714" y="2" width="1" height="1" fill="#505055"/><rect x="716" y="0" width="1" height="1" fill="#505055"/><rect x="718" y="2" width="1" height="1" fill="#505055"/><rect x="720" y="0" width="1" height="1" fill="#505055"/><rect x="722" y="2" width="1" height="1" fill="#505055"/><rect x="724" y="0" width="1" height="1" fill="#505055"/><rect x="726" y="2" width="1" height="1" fill="#505055"/><rect x="728" y="0" width="1" height="1" fill="#505055"/><rect x="730" y="2" width="1" height="1" fill="#505055"/><rect x="732" y="0" width="1" height="1" fill="#505055"/><rect x="734" y="2" width="1" height="1" fill="#505055"/><rect x="736" y="0" width="1" height="1" fill="#505055"/><rect x="738" y="2" width="1" height="1" fill="#505055"/><rect x="740" y="0" width="1" height="1" fill="#505055"/><rect x="742" y="2" width="1" height="1" fill="#505055"/><rect x="744" y="0" width="1" height="1" fill="#505055"/><rect x="746" y="2" width="1" height="1" fill="#505055"/><rect x="748" y="0" width="1" height="1" fill="#505055"/><rect x="750" y="2" width="1" height="1" fill="#505055"/><rect x="752" y="0" width="1" height="1" fill="#505055"/><rect x="754" y="2" width="1" height="1" fill="#505055"/><rect x="756" y="0" width="1" height="1" fill="#505055"/><rect x="758" y="2" width="1" height="1" fill="#505055"/><rect x="760" y="0" width="1" height="1" fill="#505055"/><rect x="762" y="2" width="1" height="1" fill="#505055"/><rect x="764" y="0" width="1" height="1" fill="#505055"/><rect x="766" y="2" width="1" height="1" fill="#505055"/><rect x="768" y="0" width="1" height="1" fill="#505055"/><rect x="770" y="2" width="1" height="1" fill="#505055"/><rect x="772" y="0" width="1" height="1" fill="#505055"/><rect x="774" y="2" width="1" height="1" fill="#505055"/><rect x="776" y="0" width="1" height="1" fill="#505055"/><rect x="778" y="2" width="1" height="1" fill="#505055"/></svg>
<svg class="s" style="left:804px;top:606px;" width="8" height="4" viewBox="0 0 8 4"><path d="M0 0H8L4.0 4Z" fill="#f1f1f1"/></svg>
<svg class="s" style="left:822px;top:603px;" width="6" height="6" viewBox="0 0 6 6"><path d="M0.7 6V0.7H4.3V6" fill="none" stroke="#f1f1f1" stroke-width="1.3"/></svg>
<svg class="s" style="left:837px;top:604px;" width="9" height="9" viewBox="0 0 9 9"><path d="M0.5 0.5L8.5 8.5M8.5 0.5L0.5 8.5" stroke="#f1f1f1" stroke-width="1.5"/></svg>
<div class="r" style="left:859px;top:85px;width:264px;height:524px;background:#2d2d30;border:1px solid #3f3f46;border-bottom:none;box-sizing:border-box;"></div>
<div class="t" style="left:864.3px;top:89.90px;font-size:13px;color:#f1f1f1;transform:scaleX(0.8987);">Solution Explorer</div>
<svg class="s" style="left:961px;top:94px;" width="106" height="5" viewBox="0 0 106 5"><rect x="0" y="0" width="1" height="1" fill="#505055"/><rect x="0" y="4" width="1" height="1" fill="#505055"/><rect x="2" y="2" width="1" height="1" fill="#505055"/><rect x="4" y="0" width="1" height="1" fill="#505055"/><rect x="4" y="4" width="1" height="1" fill="#505055"/><rect x="6" y="2" width="1" height="1" fill="#505055"/><rect x="8" y="0" width="1" height="1" fill="#505055"/><rect x="8" y="4" width="1" height="1" fill="#505055"/><rect x="10" y="2" width="1" height="1" fill="#505055"/><rect x="12" y="0" width="1" height="1" fill="#505055"/><rect x="12" y="4" width="1" height="1" fill="#505055"/><rect x="14" y="2" width="1" height="1" fill="#505055"/><rect x="16" y="0" width="1" height="1" fill="#505055"/><rect x="16" y="4" width="1" height="1" fill="#505055"/><rect x="18" y="2" width="1" height="1" fill="#505055"/><rect x="20" y="0" width="1" height="1" fill="#505055"/><rect x="20" y="4" width="1" height="1" fill="#505055"/><rect x="22" y="2" width="1" height="1" fill="#505055"/><rect x="24" y="0" width="1" height="1" fill="#505055"/><rect x="24" y="4" width="1" height="1" fill="#505055"/><rect x="26" y="2" width="1" height="1" fill="#505055"/><rect x="28" y="0" width="1" height="1" fill="#505055"/><rect x="28" y="4" width="1" height="1" fill="#505055"/><rect x="30" y="2" width="1" height="1" fill="#505055"/><rect x="32" y="0" width="1" height="1" fill="#505055"/><rect x="32" y="4" width="1" height="1" fill="#505055"/><rect x="34" y="2" width="1" height="1" fill="#505055"/><rect x="36" y="0" width="1" height="1" fill="#505055"/><rect x="36" y="4" width="1" height="1" fill="#505055"/><rect x="38" y="2" width="1" height="1" fill="#505055"/><rect x="40" y="0" width="1" height="1" fill="#505055"/><rect x="40" y="4" width="1" height="1" fill="#505055"/><rect x="42" y="2" width="1" height="1" fill="#505055"/><rect x="44" y="0" width="1" height="1" fill="#505055"/><rect x="44" y="4" width="1" height="1" fill="#505055"/><rect x="46" y="2" width="1" height="1" fill="#505055"/><rect x="48" y="0" width="1" height="1" fill="#505055"/><rect x="48" y="4" width="1" height="1" fill="#505055"/><rect x="50" y="2" width="1" height="1" fill="#505055"/><rect x="52" y="0" width="1" height="1" fill="#505055"/><rect x="52" y="4" width="1" height="1" fill="#505055"/><rect x="54" y="2" width="1" height="1" fill="#505055"/><rect x="56" y="0" width="1" height="1" fill="#505055"/><rect x="56" y="4" width="1" height="1" fill="#505055"/><rect x="58" y="2" width="1" height="1" fill="#505055"/><rect x="60" y="0" width="1" height="1" fill="#505055"/><rect x="60" y="4" width="1" height="1" fill="#505055"/><rect x="62" y="2" width="1" height="1" fill="#505055"/><rect x="64" y="0" width="1" height="1" fill="#505055"/><rect x="64" y="4" width="1" height="1" fill="#505055"/><rect x="66" y="2" width="1" height="1" fill="#505055"/><rect x="68" y="0" width="1" height="1" fill="#505055"/><rect x="68" y="4" width="1" height="1" fill="#505055"/><rect x="70" y="2" width="1" height="1" fill="#505055"/><rect x="72" y="0" width="1" height="1" fill="#505055"/><rect x="72" y="4" width="1" height="1" fill="#505055"/><rect x="74" y="2" width="1" height="1" fill="#505055"/><rect x="76" y="0" width="1" height="1" fill="#505055"/><rect x="76" y="4" width="1" height="1" fill="#505055"/><rect x="78" y="2" width="1" height="1" fill="#505055"/><rect x="80" y="0" width="1" height="1" fill="#505055"/><rect x="80" y="4" width="1" height="1" fill="#505055"/><rect x="82" y="2" width="1" height="1" fill="#505055"/><rect x="84" y="0" width="1" height="1" fill="#505055"/><rect x="84" y="4" width="1" height="1" fill="#505055"/><rect x="86" y="2" width="1" height="1" fill="#505055"/><rect x="88" y="0" width="1" height="1" fill="#505055"/><rect x="88" y="4" width="1" height="1" fill="#505055"/><rect x="90" y="2" width="1" height="1" fill="#505055"/><rect x="92" y="0" width="1" height="1" fill="#505055"/><rect x="92" y="4" width="1" height="1" fill="#505055"/><rect x="94" y="2" width="1" height="1" fill="#505055"/><rect x="96" y="0" width="1" height="1" fill="#505055"/><rect x="96" y="4" width="1" height="1" fill="#505055"/><rect x="98" y="2" width="1" height="1" fill="#505055"/><rect x="100" y="0" width="1" height="1" fill="#505055"/><rect x="100" y="4" width="1" height="1" fill="#505055"/><rect x="102" y="2" width="1" height="1" fill="#505055"/><rect x="104" y="0" width="1" height="1" fill="#505055"/><rect x="104" y="4" width="1" height="1" fill="#505055"/><rect x="106" y="2" width="1" height="1" fill="#505055"/></svg>
<svg class="s" style="left:1074px;top:94px;" width="8" height="4" viewBox="0 0 8 4"><path d="M0 0H8L4.0 4Z" fill="#f1f1f1"/></svg>
<svg class="s" style="left:1091px;top:91px;" width="8" height="12" viewBox="0 0 8 12"><path d="M2 0.7H5.5V6.5H2Z" fill="none" stroke="#f1f1f1" stroke-width="1.3"/><path d="M1.5 1V6.5" stroke="#f1f1f1" stroke-width="1"/><path d="M0 6.8H7M3.7 6.8V11" stroke="#f1f1f1" stroke-width="1.2"/></svg>
<svg class="s" style="left:1106px;top:92px;" width="10" height="9" viewBox="0 0 10 9"><path d="M0.6 0.6L9.4 8.4M9.4 0.6L0.6 8.4" stroke="#f1f1f1" stroke-width="1.5"/></svg>
<svg class="s" style="left:869px;top:114px;" width="13" height="13" viewBox="0 0 13 13"><circle cx="6.5" cy="6.5" r="6" fill="#505054"/><path d="M9.5 6.5H3.5M6 4L3.5 6.5L6 9" fill="none" stroke="#2d2d30" stroke-width="1.6"/></svg>
<svg class="s" style="left:890px;top:114px;" width="13" height="13" viewBox="0 0 13 13"><circle cx="6.5" cy="6.5" r="6" fill="#505054"/><path d="M3.5 6.5H9.5M7 4L9.5 6.5L7 9" fill="none" stroke="#2d2d30" stroke-width="1.6"/></svg>
<svg class="s" style="left:911px;top:113px;" width="16" height="15" viewBox="0 0 16 15"><path d="M1 8L8 1.3L15 8" fill="none" stroke="#d4d4d4" stroke-width="1.5"/><path d="M2.8 7V14.3H13.2V7" fill="none" stroke="#d4d4d4" stroke-width="1.4"/><rect x="6.5" y="9" width="3" height="5.5" fill="#d4d4d4"/><path d="M11.5 1V4.5" stroke="#d4d4d4" stroke-width="1.2"/></svg>
<div class="r" style="left:934px;top:111px;width:1px;height:20px;background:#46464a;"></div>
<svg class="s" style="left:943px;top:113px;" width="15" height="15" viewBox="0 0 15 15"><circle cx="9" cy="9.3" r="4.2" fill="none" stroke="#d4d4d4" stroke-width="2"/><path d="M9 7.2V9.6H11" fill="none" stroke="#d4d4d4" stroke-width="1.1"/><path d="M0.5 1.2H5.5M3 1.2V4.8" stroke="#d4d4d4" stroke-width="1.4"/></svg>
<svg class="s" style="left:964px;top:119px;" width="6" height="3" viewBox="0 0 6 3"><path d="M0 0H6L3.0 3Z" fill="#999"/></svg>
<svg class="s" style="left:977px;top:114px;" width="14" height="13" viewBox="0 0 14 13"><path d="M2.5 4H11M12.3 8.5H3.5" stroke="#d4d4d4" stroke-width="2"/><path d="M8.5 0.5L12.8 4L8.5 7.2Z M5.5 5.3L1.2 8.5L5.5 12Z" fill="#d4d4d4"/></svg>
<svg class="s" style="left:999px;top:114px;" width="14" height="14" viewBox="0 0 14 14"><path d="M2.6 9.5A4.8 4.8 0 0 1 8.5 2.2M11.4 4.5A4.8 4.8 0 0 1 5.5 11.8" fill="none" stroke="#d4d4d4" stroke-width="2.6"/><path d="M7.5 -0.5L12 2.5L7.5 5.3ZM6.5 8.7L2 11.5L6.5 14.5Z" fill="#d4d4d4"/></svg>
<svg class="s" style="left:1021px;top:113px;" width="15" height="15" viewBox="0 0 15 15"><path d="M3.5 4V2.5H11.5V10.5H10M5.5 2V0.5H14.5V8.5H12" fill="none" stroke="#d4d4d4" stroke-width="1.1"/><rect x="1.5" y="5.5" width="8" height="8" fill="#2d2d30" stroke="#d4d4d4" stroke-width="2"/><path d="M3.5 9.5H7.5" stroke="#75beff" stroke-width="1.4"/></svg>
<svg class="s" style="left:1042px;top:113px;" width="16" height="16" viewBox="0 0 16 16"><rect x="1" y="1" width="1.2" height="1.2" fill="#d4d4d4"/><rect x="3" y="1" width="1.2" height="1.2" fill="#d4d4d4"/><rect x="5" y="1" width="1.2" height="1.2" fill="#d4d4d4"/><rect x="7" y="1" width="1.2" height="1.2" fill="#d4d4d4"/><rect x="1" y="3" width="1.2" height="1.2" fill="#d4d4d4"/><rect x="1" y="5" width="1.2" height="1.2" fill="#d4d4d4"/><rect x="1" y="7" width="1.2" height="1.2" fill="#d4d4d4"/><path d="M8 3.5H12L14.5 6V11.5" fill="none" stroke="#d4d4d4" stroke-width="1"/><path d="M4.5 5.5H9.5L12.5 8.5V14.5H4.5Z" fill="#2d2d30" stroke="#d4d4d4" stroke-width="1.2"/><path d="M6.5 8.5H9M6.5 10.5H11M6.5 12.5H11" stroke="#d4d4d4" stroke-width="1"/></svg>
<div class="r" style="left:1065px;top:111px;width:1px;height:20px;background:#46464a;"></div>
<svg class="s" style="left:1074px;top:115px;" width="13" height="10" viewBox="0 0 13 10"><path d="M4.5 1L1 5L4.5 9M8.5 1L12 5L8.5 9" fill="none" stroke="#d4d4d4" stroke-width="1.5"/></svg>
<svg class="s" style="left:1114px;top:111px;" width="7" height="4" viewBox="0 0 7 4"><path d="M0 0L2 1.5L0 3ZM4 0L6 1.5L4 3Z" fill="#999"/></svg>
<div class="r" style="left:860px;top:135px;width:262px;height:21px;background:#3f3f46;"></div>
<div class="r" style="left:861px;top:136px;width:249px;height:19px;background:#333337;"></div>
<div class="t" style="left:865.3px;top:139.00px;font-size:13px;color:#999999;transform:scaleX(0.8875);">Search Solution Explorer (Ctrl+ş)</div>
<svg class="s" style="left:1094px;top:138px;" width="14" height="14" viewBox="0 0 14 14"><circle cx="8.5" cy="5.5" r="3.8" fill="none" stroke="#f1f1f1" stroke-width="1.8"/><path d="M6 8L1.5 12.5" stroke="#f1f1f1" stroke-width="2.4"/></svg>
<svg class="s" style="left:1112px;top:144px;" width="6" height="3" viewBox="0 0 6 3"><path d="M0 0H6L3.0 3Z" fill="#f1f1f1"/></svg>
<div class="r" style="left:860px;top:156px;width:262px;height:453px;background:#252526;"></div>
<div class="r" style="left:860px;top:412px;width:263px;height:19px;background:#3f3f46;"></div>
<svg class="s" style="left:872px;top:161px;" width="16" height="17" viewBox="0 0 16 17"><path d="M1.5 7.5V1.5H14.5V13.5H9" fill="none" stroke="#c8c8c8" stroke-width="1.2"/><rect x="1" y="1" width="14" height="3" fill="#c8c8c8"/><path d="M2 10.8L4 12.8L2 14.8Z M4 12.8L8 9.8V15.8Z" fill="none" stroke="#c8c8c8" stroke-width="1.4" stroke-linejoin="round"/></svg>
<div class="t" style="left:892.8px;top:163.84px;font-size:12px;color:#f1f1f1;">Solution 'Oracle_NHibernate' (1 project)</div>
<svg class="s" style="left:870px;top:184px;" width="7" height="7" viewBox="0 0 7 7"><path d="M6.5 0.5V6.5H0.5Z" fill="#f1f1f1"/></svg>
<svg class="s" style="left:890px;top:179px;" width="17" height="17" viewBox="0 0 17 17"><path d="M2.5 6V2.5H15.5V13.5H11.5" fill="none" stroke="#c8c8c8" stroke-width="1.2"/><rect x="2" y="2" width="14" height="2.8" fill="#c8c8c8"/><circle cx="5.8" cy="11.3" r="4.8" fill="#8ad48a"/><path d="M1.2 9.8H10.4M1.2 12.8H10.4M4.3 6.5V16M7.3 6.5V16" stroke="#252526" stroke-width="1"/></svg>
<div class="t" style="left:911px;top:181.84px;font-size:12px;color:#f1f1f1;font-weight:bold;">Oracle_NHibernate</div>
<svg class="s" style="left:889px;top:201px;" width="6" height="9" viewBox="0 0 6 9"><path d="M0.7 0.7L5.3 4.5L0.7 8.3Z" fill="none" stroke="#f1f1f1" stroke-width="1.2"/></svg>
<svg class="s" style="left:909px;top:197px;" width="16" height="16" viewBox="0 0 16 16"><path d="M8.2 8.3L3.3 13.2" stroke="#c8c8c8" stroke-width="3.2" stroke-linecap="round"/><circle cx="9.8" cy="6.6" r="3.8" fill="#c8c8c8"/><circle cx="10.6" cy="5.6" r="1.3" fill="#252526"/><path d="M10.8 5.4L13 3.2" stroke="#252526" stroke-width="1.6"/></svg>
<div class="t" style="left:929px;top:199.84px;font-size:12px;color:#f1f1f1;">Properties</div>
<svg class="s" style="left:889px;top:219px;" width="6" height="9" viewBox="0 0 6 9"><path d="M0.7 0.7L5.3 4.5L0.7 8.3Z" fill="none" stroke="#f1f1f1" stroke-width="1.2"/></svg>
<svg class="s" style="left:909px;top:215px;" width="16" height="16" viewBox="0 0 16 16"><rect x="0" y="6" width="4.2" height="5.2" fill="#c8c8c8"/><rect x="8" y="5" width="6" height="7" fill="#c8c8c8"/><path d="M5 8.5H7" stroke="#c8c8c8" stroke-width="1"/></svg>
<div class="t" style="left:929px;top:217.84px;font-size:12px;color:#f1f1f1;">References</div>
<svg class="s" style="left:909px;top:233px;" width="16" height="16" viewBox="0 0 16 16"><path d="M1 5H4.5L5.5 3H14V14H1Z" fill="#dbb070"/><path d="M6 4.5H13" stroke="#3a3226" stroke-width="1"/></svg>
<div class="t" style="left:929px;top:235.84px;font-size:12px;color:#f1f1f1;">App_Data</div>
<svg class="s" style="left:889px;top:255px;" width="6" height="9" viewBox="0 0 6 9"><path d="M0.7 0.7L5.3 4.5L0.7 8.3Z" fill="none" stroke="#f1f1f1" stroke-width="1.2"/></svg>
<svg class="s" style="left:909px;top:251px;" width="16" height="16" viewBox="0 0 16 16"><path d="M1 5H4.5L5.5 3H14V14H1Z" fill="#dbb070"/><path d="M6 4.5H13" stroke="#3a3226" stroke-width="1"/></svg>
<div class="t" style="left:929px;top:253.84px;font-size:12px;color:#f1f1f1;">App_Start</div>
<svg class="s" style="left:889px;top:273px;" width="6" height="9" viewBox="0 0 6 9"><path d="M0.7 0.7L5.3 4.5L0.7 8.3Z" fill="none" stroke="#f1f1f1" stroke-width="1.2"/></svg>
<svg class="s" style="left:909px;top:269px;" width="16" height="16" viewBox="0 0 16 16"><path d="M1 5H4.5L5.5 3H14V14H1Z" fill="#dbb070"/><path d="M6 4.5H13" stroke="#3a3226" stroke-width="1"/></svg>
<div class="t" style="left:929px;top:271.84px;font-size:12px;color:#f1f1f1;">Content</div>
<svg class="s" style="left:888px;top:292px;" width="7" height="7" viewBox="0 0 7 7"><path d="M6.5 0.5V6.5H0.5Z" fill="#f1f1f1"/></svg>
<svg class="s" style="left:909px;top:287px;" width="16" height="16" viewBox="0 0 16 16"><path d="M1.6 10V4.9H4.6L6 3.4H13.6V14" fill="none" stroke="#dbb070" stroke-width="1.2"/><path d="M0.3 9.1H10.4L13.3 14.2H1.4Z" fill="#dbb070"/></svg>
<div class="t" style="left:929px;top:289.84px;font-size:12px;color:#f1f1f1;">Controllers</div>
<svg class="s" style="left:907px;top:309px;" width="6" height="9" viewBox="0 0 6 9"><path d="M0.7 0.7L5.3 4.5L0.7 8.3Z" fill="none" stroke="#f1f1f1" stroke-width="1.2"/></svg>
<svg class="s" style="left:927px;top:305px;" width="16" height="16" viewBox="0 0 16 16"><path d="M7.1 6.7Q6.3 5.9 5.1 5.9Q2.9 5.9 2.9 8.6Q2.9 11.3 5.1 11.3Q6.3 11.3 7.1 10.5" fill="none" stroke="#89d185" stroke-width="2.1"/><path d="M9.3 5V10M11.5 5V10M8 6.6H13M8 8.6H13" stroke="#89d185" stroke-width="1.15"/></svg>
<div class="t" style="left:947px;top:307.84px;font-size:12px;color:#f1f1f1;">HomeController.cs</div>
<svg class="s" style="left:888px;top:328px;" width="7" height="7" viewBox="0 0 7 7"><path d="M6.5 0.5V6.5H0.5Z" fill="#f1f1f1"/></svg>
<svg class="s" style="left:909px;top:323px;" width="16" height="16" viewBox="0 0 16 16"><path d="M1.6 10V4.9H4.6L6 3.4H13.6V14" fill="none" stroke="#dbb070" stroke-width="1.2"/><path d="M0.3 9.1H10.4L13.3 14.2H1.4Z" fill="#dbb070"/></svg>
<div class="t" style="left:929px;top:325.84px;font-size:12px;color:#f1f1f1;">DB</div>
<svg class="s" style="left:906px;top:346px;" width="7" height="7" viewBox="0 0 7 7"><path d="M6.5 0.5V6.5H0.5Z" fill="#f1f1f1"/></svg>
<svg class="s" style="left:927px;top:341px;" width="16" height="16" viewBox="0 0 16 16"><path d="M1.6 10V4.9H4.6L6 3.4H13.6V14" fill="none" stroke="#dbb070" stroke-width="1.2"/><path d="M0.3 9.1H10.4L13.3 14.2H1.4Z" fill="#dbb070"/></svg>
<div class="t" style="left:947px;top:343.84px;font-size:12px;color:#f1f1f1;">FluentConnect</div>
<svg class="s" style="left:925px;top:363px;" width="6" height="9" viewBox="0 0 6 9"><path d="M0.7 0.7L5.3 4.5L0.7 8.3Z" fill="none" stroke="#f1f1f1" stroke-width="1.2"/></svg>
<svg class="s" style="left:945px;top:359px;" width="16" height="16" viewBox="0 0 16 16"><path d="M7.1 6.7Q6.3 5.9 5.1 5.9Q2.9 5.9 2.9 8.6Q2.9 11.3 5.1 11.3Q6.3 11.3 7.1 10.5" fill="none" stroke="#89d185" stroke-width="2.1"/><path d="M9.3 5V10M11.5 5V10M8 6.6H13M8 8.6H13" stroke="#89d185" stroke-width="1.15"/></svg>
<div class="t" style="left:965px;top:361.84px;font-size:12px;color:#f1f1f1;">Contex.cs</div>
<svg class="s" style="left:906px;top:382px;" width="7" height="7" viewBox="0 0 7 7"><path d="M6.5 0.5V6.5H0.5Z" fill="#f1f1f1"/></svg>
<svg class="s" style="left:927px;top:377px;" width="16" height="16" viewBox="0 0 16 16"><path d="M1.6 10V4.9H4.6L6 3.4H13.6V14" fill="none" stroke="#dbb070" stroke-width="1.2"/><path d="M0.3 9.1H10.4L13.3 14.2H1.4Z" fill="#dbb070"/></svg>
<div class="t" style="left:947px;top:379.84px;font-size:12px;color:#f1f1f1;">Mapping</div>
<svg class="s" style="left:925px;top:399px;" width="6" height="9" viewBox="0 0 6 9"><path d="M0.7 0.7L5.3 4.5L0.7 8.3Z" fill="none" stroke="#f1f1f1" stroke-width="1.2"/></svg>
<svg class="s" style="left:945px;top:395px;" width="16" height="16" viewBox="0 0 16 16"><path d="M7.1 6.7Q6.3 5.9 5.1 5.9Q2.9 5.9 2.9 8.6Q2.9 11.3 5.1 11.3Q6.3 11.3 7.1 10.5" fill="none" stroke="#89d185" stroke-width="2.1"/><path d="M9.3 5V10M11.5 5V10M8 6.6H13M8 8.6H13" stroke="#89d185" stroke-width="1.15"/></svg>
<div class="t" style="left:965px;top:397.84px;font-size:12px;color:#f1f1f1;">MakinaMap.cs</div>
<svg class="s" style="left:906px;top:418px;" width="7" height="7" viewBox="0 0 7 7"><path d="M6.5 0.5V6.5H0.5Z" fill="#f1f1f1"/></svg>
<svg class="s" style="left:927px;top:413px;" width="16" height="16" viewBox="0 0 16 16"><path d="M1.6 10V4.9H4.6L6 3.4H13.6V14" fill="none" stroke="#dbb070" stroke-width="1.2"/><path d="M0.3 9.1H10.4L13.3 14.2H1.4Z" fill="#dbb070"/></svg>
<div class="t" style="left:947px;top:415.84px;font-size:12px;color:#f1f1f1;">Models</div>
<svg class="s" style="left:925px;top:435px;" width="6" height="9" viewBox="0 0 6 9"><path d="M0.7 0.7L5.3 4.5L0.7 8.3Z" fill="none" stroke="#f1f1f1" stroke-width="1.2"/></svg>
<svg class="s" style="left:945px;top:431px;" width="16" height="16" viewBox="0 0 16 16"><path d="M7.1 6.7Q6.3 5.9 5.1 5.9Q2.9 5.9 2.9 8.6Q2.9 11.3 5.1 11.3Q6.3 11.3 7.1 10.5" fill="none" stroke="#89d185" stroke-width="2.1"/><path d="M9.3 5V10M11.5 5V10M8 6.6H13M8 8.6H13" stroke="#89d185" stroke-width="1.15"/></svg>
<div class="t" style="left:965px;top:433.84px;font-size:12px;color:#f1f1f1;">BaseClass.cs</div>
<svg class="s" style="left:925px;top:453px;" width="6" height="9" viewBox="0 0 6 9"><path d="M0.7 0.7L5.3 4.5L0.7 8.3Z" fill="none" stroke="#f1f1f1" stroke-width="1.2"/></svg>
<svg class="s" style="left:945px;top:449px;" width="16" height="16" viewBox="0 0 16 16"><path d="M7.1 6.7Q6.3 5.9 5.1 5.9Q2.9 5.9 2.9 8.6Q2.9 11.3 5.1 11.3Q6.3 11.3 7.1 10.5" fill="none" stroke="#89d185" stroke-width="2.1"/><path d="M9.3 5V10M11.5 5V10M8 6.6H13M8 8.6H13" stroke="#89d185" stroke-width="1.15"/></svg>
<div class="t" style="left:965px;top:451.84px;font-size:12px;color:#f1f1f1;">MAKINA.cs</div>
<svg class="s" style="left:889px;top:471px;" width="6" height="9" viewBox="0 0 6 9"><path d="M0.7 0.7L5.3 4.5L0.7 8.3Z" fill="none" stroke="#f1f1f1" stroke-width="1.2"/></svg>
<svg class="s" style="left:909px;top:467px;" width="16" height="16" viewBox="0 0 16 16"><path d="M1 5H4.5L5.5 3H14V14H1Z" fill="#dbb070"/><path d="M6 4.5H13" stroke="#3a3226" stroke-width="1"/></svg>
<div class="t" style="left:929px;top:469.84px;font-size:12px;color:#f1f1f1;">fonts</div>
<svg class="s" style="left:889px;top:489px;" width="6" height="9" viewBox="0 0 6 9"><path d="M0.7 0.7L5.3 4.5L0.7 8.3Z" fill="none" stroke="#f1f1f1" stroke-width="1.2"/></svg>
<svg class="s" style="left:909px;top:485px;" width="16" height="16" viewBox="0 0 16 16"><path d="M1 5H4.5L5.5 3H14V14H1Z" fill="#dbb070"/><path d="M6 4.5H13" stroke="#3a3226" stroke-width="1"/></svg>
<div class="t" style="left:929px;top:487.84px;font-size:12px;color:#f1f1f1;">Scripts</div>
<svg class="s" style="left:889px;top:507px;" width="6" height="9" viewBox="0 0 6 9"><path d="M0.7 0.7L5.3 4.5L0.7 8.3Z" fill="none" stroke="#f1f1f1" stroke-width="1.2"/></svg>
<svg class="s" style="left:909px;top:503px;" width="16" height="16" viewBox="0 0 16 16"><path d="M1 5H4.5L5.5 3H14V14H1Z" fill="#dbb070"/><path d="M6 4.5H13" stroke="#3a3226" stroke-width="1"/></svg>
<div class="t" style="left:929px;top:505.84px;font-size:12px;color:#f1f1f1;">Views</div>
<svg class="s" style="left:909px;top:521px;" width="16" height="16" viewBox="0 0 16 16"><path d="M3.5 3.5H10L12.5 6V14.5H3.5Z" fill="none" stroke="#c8c8c8"/><path d="M6 6.5H7M8 8H9M5.5 9.5H7.5M6.5 8.5V10.5M9 10.5H10M6 12.5H7M8.5 12.5H9.5" stroke="#c8c8c8"/></svg>
<div class="t" style="left:929px;top:523.84px;font-size:12px;color:#f1f1f1;">favicon.ico</div>
<svg class="s" style="left:889px;top:543px;" width="6" height="9" viewBox="0 0 6 9"><path d="M0.7 0.7L5.3 4.5L0.7 8.3Z" fill="none" stroke="#f1f1f1" stroke-width="1.2"/></svg>
<svg class="s" style="left:909px;top:539px;" width="16" height="16" viewBox="0 0 16 16"><g transform="translate(-0.5,-1)"><path d="M5.5 8V3.5H11.5L14.5 6.5V14.5H8.5" fill="none" stroke="#c8c8c8"/><circle cx="4" cy="13" r="2.8" fill="none" stroke="#c8c8c8" stroke-width="1.8" stroke-dasharray="1.3 0.9"/><circle cx="4" cy="13" r="1.6" fill="none" stroke="#c8c8c8" stroke-width="1"/></g></svg>
<div class="t" style="left:929px;top:541.84px;font-size:12px;color:#f1f1f1;">Global.asax</div>
<svg class="s" style="left:909px;top:557px;" width="16" height="16" viewBox="0 0 16 16"><g transform="translate(-0.5,-1)"><path d="M5.5 8V3.5H11.5L14.5 6.5V14.5H8.5" fill="none" stroke="#c8c8c8"/><path d="M2 9V11Q2 13 4 13Q6 13 6 11V9M4 13V16" fill="none" stroke="#c8c8c8" stroke-width="1.7"/></g></svg>
<div class="t" style="left:929px;top:559.84px;font-size:12px;color:#f1f1f1;">packages.config</div>
<svg class="s" style="left:909px;top:575px;" width="16" height="16" viewBox="0 0 16 16"><g transform="translate(-0.5,-1)"><path d="M5.5 8V3.5H11.5L14.5 6.5V14.5H9.5" fill="none" stroke="#c8c8c8"/><circle cx="5.5" cy="13" r="2" fill="#3ca0f0"/><path d="M2.2 11.3L0.8 13L2.2 14.7M8.8 11.3L10.2 13L8.8 14.7" fill="none" stroke="#c8c8c8"/></g></svg>
<div class="t" style="left:929px;top:577.84px;font-size:12px;color:#f1f1f1;">Project_Readme.html</div>
<svg class="s" style="left:889px;top:597px;" width="6" height="9" viewBox="0 0 6 9"><path d="M0.7 0.7L5.3 4.5L0.7 8.3Z" fill="none" stroke="#f1f1f1" stroke-width="1.2"/></svg>
<svg class="s" style="left:909px;top:593px;" width="16" height="16" viewBox="0 0 16 16"><g transform="translate(-0.5,-1)"><path d="M5.5 8V3.5H11.5L14.5 6.5V14.5H8.5" fill="none" stroke="#c8c8c8"/><path d="M2 9V11Q2 13 4 13Q6 13 6 11V9M4 13V16" fill="none" stroke="#c8c8c8" stroke-width="1.7"/></g></svg>
<div class="t" style="left:929px;top:595.84px;font-size:12px;color:#f1f1f1;">Web.config</div>
</body></html>
